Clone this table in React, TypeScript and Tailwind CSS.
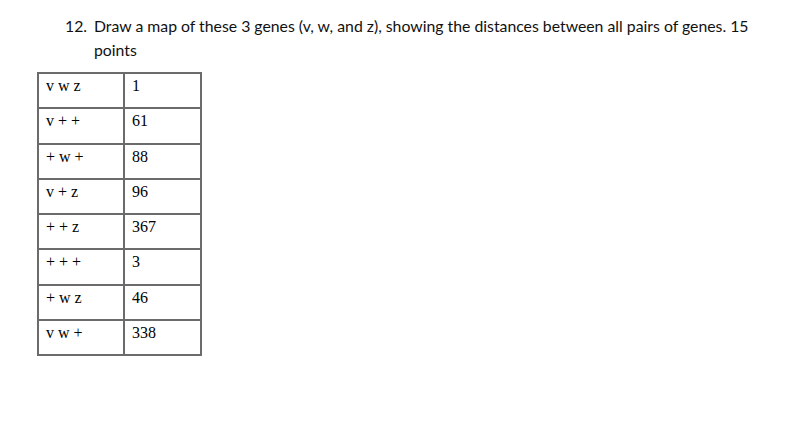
const rows = [
  ["v w z", "1"],
  ["v + +", "61"],
  ["+ w +", "88"],
  ["v + z", "96"],
  ["+ + z", "367"],
  ["+ + +", "3"],
  ["+ w z", "46"],
  ["v w +", "338"],
];

export default function App() {
  return (
    <div className="w-[804px] h-[434px] bg-white overflow-hidden">
      <div className="flex pl-[65px] pt-[14px] pr-[40px] text-[15.8px] leading-[24px] text-[#111] font-['Lato',sans-serif]">
        <span className="w-[29px] shrink-0">12.</span>
        <p>
          Draw a map of these 3 genes (v, w, and z), showing the distances between all pairs of genes. 15 points
        </p>
      </div>
      <table className="ml-[37px] mt-[10px] border-collapse border-2 border-[#6b6b6b] text-[16px] leading-[18px] text-black font-[family-name:'Liberation_Serif','Times_New_Roman',serif]">
        <tbody>
          {rows.map(([g, n]) => (
            <tr key={g} className="h-[35.3px]">
              <td className="w-[86px] border-2 border-[#6b6b6b] px-[7px] pt-[3px] align-top">{g}</td>
              <td className="w-[77px] border-2 border-[#6b6b6b] px-[7px] pt-[3px] align-top">{n}</td>
            </tr>
          ))}
        </tbody>
      </table>
    </div>
  );
}
